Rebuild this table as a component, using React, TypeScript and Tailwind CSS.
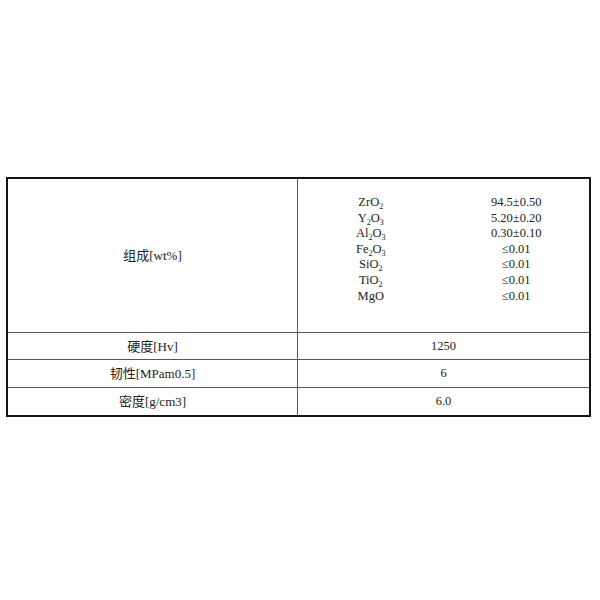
import React from "react";

const serif = { fontFamily: '"Liberation Serif", "Times New Roman", serif' };
const cjk = { fontFamily: '"Noto Sans CJK SC", sans-serif' };

const Chem = ({ parts }: { parts: [string, string?][] }) => (
  <div className="h-[15.6px] leading-[15.6px] whitespace-nowrap">
    {parts.map(([base, sub], i) => (
      <React.Fragment key={i}>
        {base}
        {sub && <span className="text-[8px] leading-none relative top-[3px]">{sub}</span>}
      </React.Fragment>
    ))}
  </div>
);

const composition: { f: [string, string?][]; v: string }[] = [
  { f: [["Zr"], ["O", "2"]], v: "94.5±0.50" },
  { f: [["Y", "2"], ["O", "3"]], v: "5.20±0.20" },
  { f: [["Al", "2"], ["O", "3"]], v: "0.30±0.10" },
  { f: [["Fe", "2"], ["O", "3"]], v: "≤0.01" },
  { f: [["Si"], ["O", "2"]], v: "≤0.01" },
  { f: [["Ti"], ["O", "2"]], v: "≤0.01" },
  { f: [["MgO"]], v: "≤0.01" },
];

const rows = [
  { zh: "硬度", unit: "[Hv]", value: "1250" },
  { zh: "韧性", unit: "[MPam0.5]", value: "6" },
  { zh: "密度", unit: "[g/cm3]", value: "6.0" },
];

const Label = ({ zh, unit }: { zh: string; unit: string }) => (
  <span className="text-[13px]">
    <span style={cjk}>{zh}</span>
    <span style={serif}>{unit}</span>
  </span>
);

export default function App() {
  return (
    <div className="w-[600px] h-[600px] bg-white pt-[177px] pl-[6px] text-[#222]" style={serif}>
      <div className="w-[585px] border-2 border-[#151515]">
        <div className="grid grid-cols-[290px_1fr] h-[154px] border-b border-[#555]">
          <div className="border-r border-[#555] flex items-center justify-center">
            <Label zh="组成" unit="[wt%]" />
          </div>
          <div className="pt-[16px] grid grid-cols-2 text-[12.5px]">
            <div className="flex flex-col items-center">
              {composition.map((c, i) => (
                <Chem key={i} parts={c.f} />
              ))}
            </div>
            <div className="flex flex-col items-center">
              {composition.map((c, i) => (
                <div key={i} className="h-[15.6px] leading-[15.6px]">{c.v}</div>
              ))}
            </div>
          </div>
        </div>
        {rows.map((r, i) => (
          <div
            key={r.zh}
            className={`grid grid-cols-[290px_1fr] h-[27.3px] ${i < rows.length - 1 ? "border-b border-[#555]" : ""}`}
          >
            <div className="border-r border-[#555] flex items-center justify-center">
              <Label zh={r.zh} unit={r.unit} />
            </div>
            <div className="flex items-center justify-center text-[12.5px]">{r.value}</div>
          </div>
        ))}
      </div>
    </div>
  );
}
